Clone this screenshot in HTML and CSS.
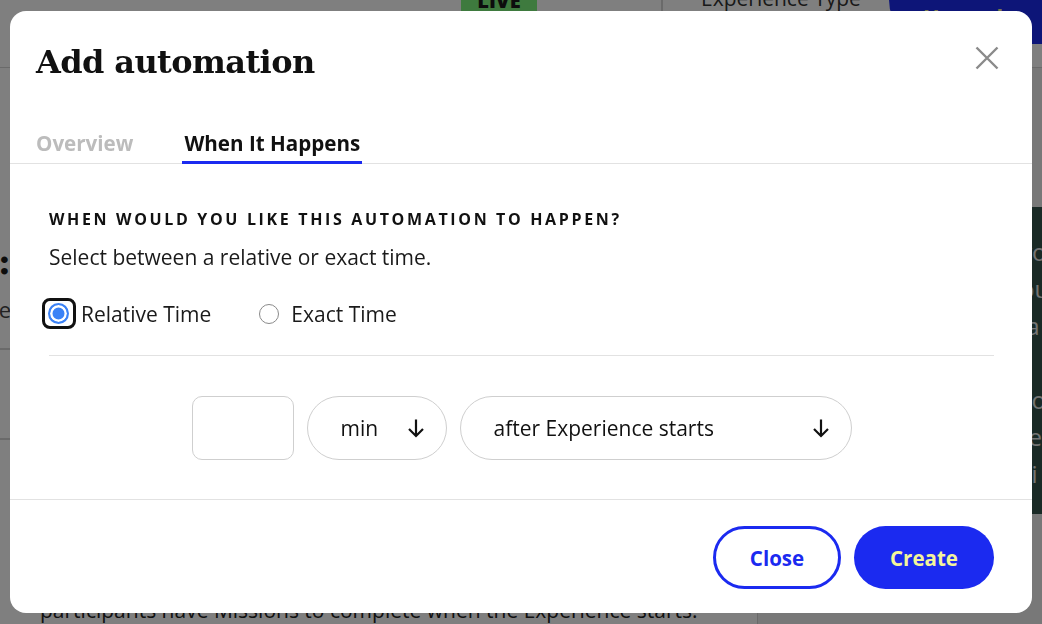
FILE: index.html
```html
<html>

<head>
	<meta charset="utf-8">
	<link rel="stylesheet" href="styles.css">
</head>

<body>
	<div class="page">
		<div class="topbar">
			<div class="topbar-left"></div>
			<div class="live-badge">LIVE</div>
			<div class="topbar-sep"></div>
			<div class="exp-type">Experience Type</div>
			<div class="upgrade-btn">Upgrade</div>
		</div>
		<div class="main">
			<div class="content">
				<div class="content-head">
					<div class="content-title"><span>Mechanic:</span></div>
					<div class="content-sub"><span>We</span></div>
				</div>
				<div class="content-row"></div>
				<div class="content-row tall"></div>
				<p class="content-text">participants have Missions to complete when the Experience starts.</p>
			</div>
			<div class="sidebar">
				<div class="side-card">
					<p>you</p>
					<p>our</p>
					<p>&nbsp;a</p>
					<p>&nbsp;</p>
					<p>co</p>
					<p>te</p>
					<p>ci</p>
				</div>
			</div>
		</div>
	</div>

	<div class="overlay">
		<div class="modal">
			<div class="modal-header">
				<div class="modal-title-row">
					<h1 class="modal-title">Add automation</h1>
					<button class="modal-close" aria-label="Close">
						<svg width="24" height="24" viewBox="0 0 24 24">
							<path d="M1.5 1.5 L22.5 22.5 M22.5 1.5 L1.5 22.5" stroke="#8a8a8a" stroke-width="2.4" fill="none" />
						</svg>
					</button>
				</div>
				<div class="tabs">
					<div class="tab">Overview</div>
					<div class="tab active">When It Happens</div>
				</div>
			</div>

			<div class="modal-body">
				<div class="section-title">When would you like this automation to happen?</div>
				<div class="section-desc">Select between a relative or exact time.</div>
				<div class="radio-row">
					<label class="radio-option focused">
						<span class="radio-focus"><span class="radio checked"></span></span>
						<span>Relative Time</span>
					</label>
					<label class="radio-option">
						<span class="radio"></span>
						<span>Exact Time</span>
					</label>
				</div>
				<div class="body-sep"></div>
				<div class="time-row">
					<div class="num-input"></div>
					<div class="select select-unit">
						<span>min</span>
						<svg class="arrow" width="18" height="20" viewBox="0 0 18 20">
							<path d="M9 1.5 V18 M2 11 L9 18 L16 11" stroke="#111" stroke-width="2.2" fill="none" />
						</svg>
					</div>
					<div class="select select-when">
						<span>after Experience starts</span>
						<svg class="arrow" width="18" height="20" viewBox="0 0 18 20">
							<path d="M9 1.5 V18 M2 11 L9 18 L16 11" stroke="#111" stroke-width="2.2" fill="none" />
						</svg>
					</div>
				</div>
			</div>

			<div class="modal-footer">
				<button class="btn btn-outline">Close</button>
				<button class="btn btn-primary">Create</button>
			</div>
		</div>
	</div>
</body>

</html>
```

FILE: styles.css
```css
body {
	margin: 0;
	width: 1042px;
	height: 624px;
	overflow: hidden;
	font-family: "Open Sans", "Noto Sans", sans-serif;
	color: #1a1a1a;
	background-color: white;
}

/* page behind the dialog */
.page {
	height: 624px;
	display: flex;
	flex-direction: column;
}

.topbar {
	height: 68px;
	flex: none;
	display: flex;
	align-items: flex-start;
	border-bottom: 1px solid #d4d4d4;
	box-sizing: border-box;
}

.topbar > div {
	flex: none;
}

.topbar-left {
	width: 461px;
}

.live-badge {
	margin-top: -12px;
	width: 76px;
	height: 24px;
	background-color: #7cf47c;
	font-weight: 800;
	font-size: 20px;
	text-align: center;
	line-height: 26px;
}

.topbar-sep {
	margin-left: 124px;
	width: 2px;
	height: 40px;
	background-color: #d4d4d4;
}

.exp-type {
	margin-top: -16px;
	margin-left: 38px;
	font-size: 21px;
	color: #333;
	white-space: nowrap;
}

.upgrade-btn {
	margin-top: -44px;
	margin-left: 28px;
	width: 200px;
	height: 88px;
	border-radius: 44px;
	background-color: #1b2af0;
	color: #f4f59b;
	font-size: 22px;
	font-weight: 700;
	line-height: 120px;
	padding-left: 34px;
	box-sizing: border-box;
	overflow: hidden;
}

.main {
	flex: 1;
	display: flex;
}

.content {
	width: 757px;
	flex: none;
	border-right: 1px solid #d4d4d4;
	display: flex;
	flex-direction: column;
}

.content-head {
	margin-top: 172px;
	height: 108px;
	border-bottom: 2px solid #d4d4d4;
}

.content-title,
.content-sub {
	width: 11px;
	display: flex;
	justify-content: flex-end;
	white-space: nowrap;
}

.content-title {
	font-family: "DejaVu Serif", serif;
	font-weight: 700;
	font-size: 36px;
}

.content-sub {
	margin-top: 12px;
	font-size: 22px;
	color: #444;
}

.content-row {
	height: 88px;
	border-bottom: 2px solid #d4d4d4;
}

.content-row.tall {
	height: 156px;
	border-bottom: none;
}

.content-text {
	margin: 0 0 0 40px;
	font-size: 21px;
	color: #222;
	white-space: nowrap;
}

.sidebar {
	flex: 1;
	display: flex;
	flex-direction: column;
	padding-top: 139px;
	background-color: #f0f0f0;
	align-items: flex-end;
}

.side-card {
	width: 220px;
	height: 307px;
	background-color: #34554c;
	color: #e8e8e8;
	font-size: 24px;
	padding: 26px 0 0 18px;
	box-sizing: border-box;
	margin-right: -180px;
}

.side-card p {
	margin: 0;
	line-height: 37px;
}

/* dialog */
.overlay {
	position: fixed;
	left: 0;
	top: 0;
	right: 0;
	bottom: 0;
	background-color: rgba(0, 0, 0, 0.5);
	display: flex;
	align-items: center;
	justify-content: center;
}

.modal {
	width: 1022px;
	height: 602px;
	background-color: white;
	border-radius: 16px;
	display: flex;
	flex-direction: column;
	overflow: hidden;
}

.modal-header {
	padding: 31px 0 0 24px;
	border-bottom: 1px solid #e2e2e2;
}

.modal-title-row {
	display: flex;
	justify-content: space-between;
	align-items: center;
	height: 40px;
}

.modal-title {
	margin: 0 0 0 2px;
	font-family: "DejaVu Serif", serif;
	font-weight: 700;
	font-size: 32px;
	color: #111;
	letter-spacing: -0.6px;
}

.modal-close {
	margin-right: 33px;
	border: none;
	background: none;
	padding: 0;
	width: 24px;
	height: 24px;
	margin-top: -8px;
}

.tabs {
	margin-top: 47px;
	display: flex;
	gap: 47px;
}

.tab {
	padding: 0 2px 4px 2px;
	line-height: 28px;
	font-size: 20.6px;
	font-weight: 700;
	color: #bcbcbc;
	border-bottom: 3px solid transparent;
	margin-bottom: -1px;
}

.tab.active {
	color: #111;
	border-bottom-color: #1b2af0;
}

.modal-body {
	padding: 45px 38px 39px 39px;
}

.section-title {
	font-size: 16px;
	line-height: 20px;
	font-weight: 700;
	text-transform: uppercase;
	letter-spacing: 2.65px;
	color: #111;
}

.section-desc {
	margin-top: 15px;
	font-size: 21px;
	line-height: 26px;
}

.radio-row {
	margin-top: 29px;
	height: 30px;
	display: flex;
	align-items: center;
	gap: 48px;
}

.radio-option {
	display: flex;
	align-items: center;
	gap: 12px;
	font-size: 21px;
}

.radio-option.focused {
	gap: 5px;
}

.radio {
	width: 20px;
	height: 20px;
	border-radius: 50%;
	border: 1.5px solid #8a8a8a;
	box-sizing: border-box;
	display: block;
}

.radio.checked {
	width: 21px;
	height: 21px;
	border: 2px solid #3b82f6;
	background-color: #3b82f6;
	box-shadow: inset 0 0 0 2.5px white;
}

.radio-focus {
	margin: -6px 0 -5px -7px;
	padding: 2px 4px 2px 3px;
	border: 3px solid #111;
	border-radius: 8px;
	display: block;
}

.body-sep {
	margin-top: 26px;
	height: 1px;
	background-color: #e2e2e2;
}

.time-row {
	margin-top: 40px;
	display: flex;
	justify-content: center;
	gap: 13px;
}

.num-input {
	width: 102px;
	height: 64px;
	border: 1px solid #cfcfcf;
	border-radius: 10px;
	box-sizing: border-box;
}

.select {
	height: 64px;
	border: 1px solid #cfcfcf;
	border-radius: 32px;
	box-sizing: border-box;
	display: flex;
	align-items: center;
	justify-content: space-between;
	padding: 0 21px 0 33px;
	font-size: 21px;
	color: #111;
}

.select-unit {
	width: 140px;
}

.select-when {
	width: 392px;
}

.arrow {
	display: block;
}

.modal-footer {
	margin-top: auto;
	border-top: 1px solid #e2e2e2;
	padding: 26px 38px 25px 0;
	display: flex;
	justify-content: flex-end;
	gap: 13px;
}

.btn {
	height: 63px;
	border-radius: 32px;
	font-family: "Open Sans", "Noto Sans", sans-serif;
	font-size: 20.5px;
	font-weight: 700;
	box-sizing: border-box;
}

.btn-outline {
	width: 128px;
	border: 3px solid #1b2af0;
	background-color: white;
	color: #1b2af0;
}

.btn-primary {
	width: 140px;
	border: none;
	background-color: #1b2af0;
	color: #f4f59b;
}
```
